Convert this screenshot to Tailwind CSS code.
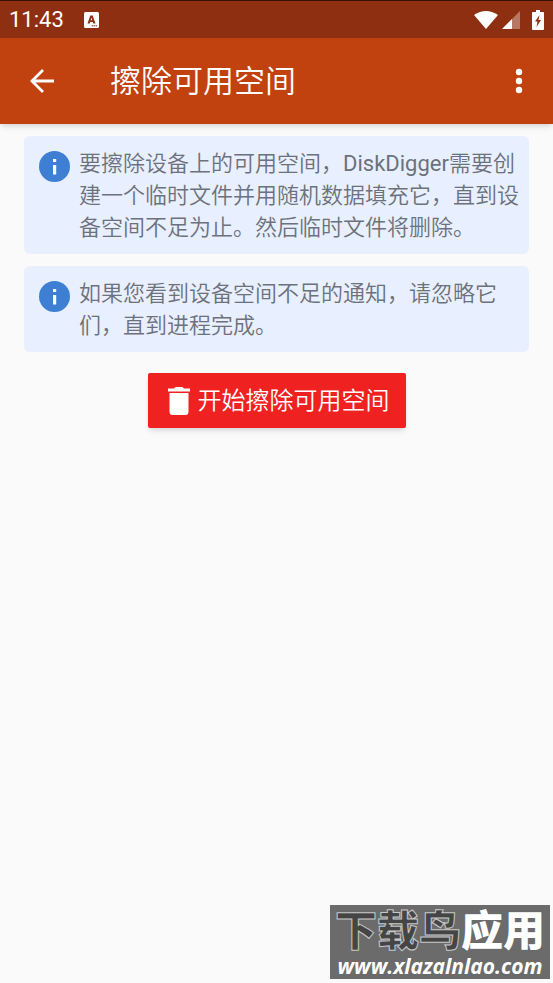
<!DOCTYPE html>
<html lang="zh-CN">
<head>
<meta charset="utf-8">
<meta name="viewport" content="width=device-width, initial-scale=1">
<title>擦除可用空间</title>
<script src="https://cdn.jsdelivr.net/npm/@tailwindcss/browser@4"></script>
</head>
<body class="flex min-h-screen flex-col bg-[#fafafa] font-[Roboto,'Noto_Sans_CJK_SC',sans-serif]">
<div class="flex h-[38px] items-center border-t border-[#3a0f08] bg-[#8f2f12] px-[9px] text-white">
  <span class="text-[22px] leading-6">11:43</span>
  <svg class="ml-5 h-4 w-4" viewBox="0 0 16 16" aria-hidden="true"><rect x="0" width="15" height="16" rx="1.5" fill="#fff"/><path d="M3.500 11.500 6.300 3.500h2.400L11.500 11.500H9.300l-.5-1.600H6.200L5.700 11.500zM6.700 8.300h1.600L7.500 5.600z" fill="#8f2f12"/><path d="M7.500 13.800h6" stroke="#8f2f12" stroke-dasharray="1.500 .5"/></svg>
  <div class="ml-auto flex items-center">
    <svg class="h-[18px] w-6" viewBox="0 0 24 18" aria-hidden="true"><path d="M0 4Q12-4 24 4L12 18Z" fill="#fff"/></svg>
    <svg class="ml-1 h-[18px] w-[18px]" viewBox="0 0 18 18" aria-hidden="true"><path d="M0 18 18 0v18z" fill="#fff" opacity=".35"/><path d="M0 18 10 8v10z" fill="#fff"/></svg>
    <svg class="ml-3 h-5 w-3" viewBox="0 0 12 20" aria-hidden="true"><path d="M4 0h4v2h3q1 0 1 1v16q0 1-1 1H1q-1 0-1-1V3q0-1 1-1h3z" fill="#fff"/><path d="M7.500 5 3 11.500h2.500L4.500 17 9 10H6.500z" fill="#8f2f12"/></svg>
  </div>
</div>
<header class="flex h-[86px] items-center bg-[#c1410f] pl-6 pr-4 text-white shadow-md">
  <button type="button" aria-label="返回" class="flex h-9 w-9 items-center justify-center"><svg class="h-6 w-6" viewBox="0 0 24 24" fill="none" stroke="#fff" stroke-width="2.800" aria-hidden="true"><path d="M24 12H2M13 1 2 12l11 11"/></svg></button>
  <h1 class="ml-[50px] pt-[2px] text-[31px] leading-10 font-[350]">擦除可用空间</h1>
  <button type="button" aria-label="更多选项" class="ml-auto flex h-9 w-9 items-center justify-center"><svg class="h-7 w-2" viewBox="0 0 8 28" fill="#fff" aria-hidden="true"><circle cx="4" cy="5" r="3.200"/><circle cx="4" cy="14" r="3.200"/><circle cx="4" cy="23" r="3.200"/></svg></button>
</header>
<main class="flex flex-1 flex-col gap-3 px-6 pt-3">
  <section class="flex items-start gap-2 rounded-md bg-[#e8effe] pt-3 pb-[10px] pl-[15px] pr-2">
    <svg class="mt-[3px] h-8 w-8 shrink-0" viewBox="0 0 32 32" aria-hidden="true"><circle cx="15.500" cy="15.500" r="15.500" fill="#3f7fd3"/><path d="M14 8h3.200v3H14zM14 14h3.200v9.500H14z" fill="#fff"/></svg>
    <p class="text-[22px] leading-8 font-[350] text-[#6c717b]">要擦除设备上的可用空间，<span class="font-normal">DiskDigger</span>需要创建一个临时文件并用随机数据填充它，直到设备空间不足为止。然后临时文件将删除。</p>
  </section>
  <section class="flex items-start gap-2 rounded-md bg-[#e8effe] pt-3 pb-[10px] pl-[15px] pr-2">
    <svg class="mt-[3px] h-8 w-8 shrink-0" viewBox="0 0 32 32" aria-hidden="true"><circle cx="15.500" cy="15.500" r="15.500" fill="#3f7fd3"/><path d="M14 8h3.200v3H14zM14 14h3.200v9.500H14z" fill="#fff"/></svg>
    <p class="text-[22px] leading-8 font-[350] text-[#6c717b]">如果您看到设备空间不足的通知，请忽略它们，直到进程完成。</p>
  </section>
  <button type="button" class="mt-[9px] flex h-[55px] items-center gap-2 self-center rounded-xs bg-[#f02121] pl-5 pr-4 text-[24px] font-[350] text-white shadow-md">
    <svg class="h-7 w-[22px]" viewBox="0 0 22 28" fill="#fff" aria-hidden="true"><path d="M0 1.500h6L7.500 0h7L16 1.500h6v3H0zM1.500 6h19v18.500q0 3.500-3 3.500h-13q-3 0-3-3.500z"/></svg>
    开始擦除可用空间
  </button>
</main>
<footer class="flex justify-end pr-[3px] pb-1">
  <div class="flex w-[220px] flex-col items-center bg-[#6b6b6b] pt-1 pb-[2px] text-white">
    <div class="flex text-[42px] leading-[46px] font-black whitespace-nowrap"><span class="text-[#454545] [-webkit-text-stroke:1px_#c8c8c8]">下载鸟</span><span>应用</span></div>
    <a href="#" class="text-[21px] leading-[22px] font-[Open_Sans,sans-serif] font-bold italic">www.xlazalnlao.com</a>
  </div>
</footer>
</body>
</html>
